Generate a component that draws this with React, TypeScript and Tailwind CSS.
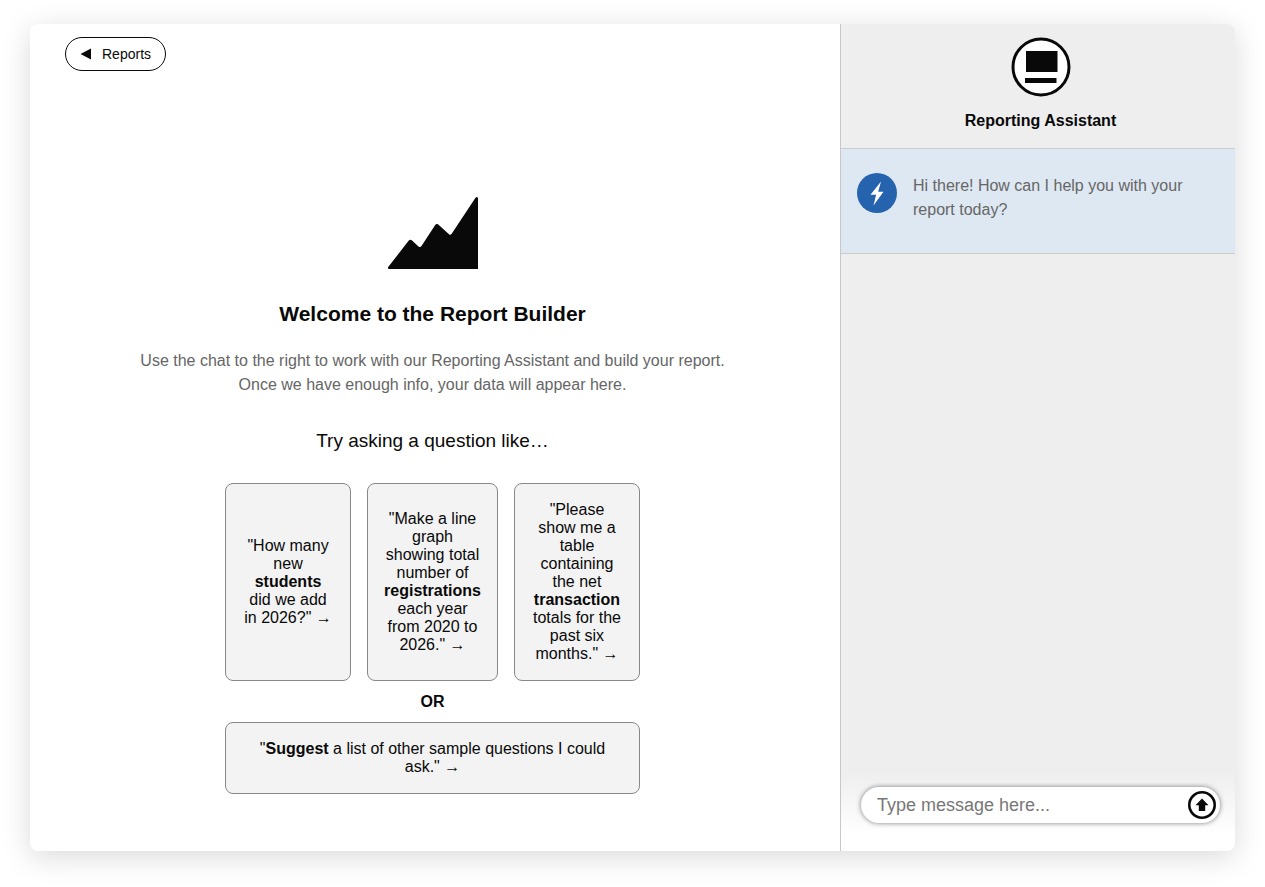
import React, { ReactNode } from 'react';

type PromptCardProps = {
  children: ReactNode;
  className?: string;
};

const PromptCard: React.FC<PromptCardProps> = ({ children, className = '' }) => (
  <button
    type="button"
    className={`rounded-lg border border-[#888] bg-[#f3f3f3] px-4 py-[17px] text-center text-base leading-[18px] ${className}`}
  >
    {children}
  </button>
);

const ChartIcon = () => (
  <svg width="92" height="74" viewBox="0 0 92 74" fill="currentColor" aria-hidden="true">
    <path d="M2 73h89V2.500q-.5-2.500-2.500-.8L64.500 38q-1 1.500-2.500.3L51 28.300q-1.500-1-2.800.6L34.500 50q-1.500 1.800-3 .4L24.800 44.200q-1.600-1.200-3 .4L1.200 71q-.8 2 .8 2z" />
  </svg>
);

const AssistantLogo = () => (
  <svg width="60" height="60" viewBox="0 0 60 60" aria-hidden="true">
    <circle cx="30" cy="30" r="28" fill="#fff" stroke="#090909" strokeWidth="3" />
    <path fill="#090909" d="M15 14h31.500v21H15zM14 41h31.500v5H14z" />
  </svg>
);

const BoltAvatar = () => (
  <svg width="40" height="40" viewBox="0 0 40 40" className="shrink-0" aria-hidden="true">
    <circle cx="20" cy="20" r="20" fill="#2563ae" />
    <path fill="#fff" d="M24 8.500L13.500 21.800h5.600L16.500 32.500 26.500 18.700h-5.300z" />
  </svg>
);

const SendIcon = () => (
  <svg width="28" height="28" viewBox="0 0 28 28" aria-hidden="true">
    <circle cx="14" cy="14" r="12.700" fill="#fff" stroke="#090909" strokeWidth="2.600" />
    <path fill="#090909" d="M14 7.500l6.500 6.800h-3.300V20h-6.400v-5.700H7.500z" />
  </svg>
);

const ReportPane = () => (
  <main className="flex min-w-0 flex-1 flex-col">
    <div className="px-[35px] pt-[13px]">
      <button
        type="button"
        className="flex h-[34px] items-center gap-[11px] rounded-full border border-[#090909] px-[14px] text-sm"
      >
        <svg width="11" height="12" viewBox="0 0 11 12" fill="currentColor" aria-hidden="true">
          <path d="M0.500 6L11 0.500v11z" />
        </svg>
        Reports
      </button>
    </div>

    <div className="flex flex-1 flex-col items-center justify-center pt-[67px] pr-[25px] pl-5 text-center">
      <ChartIcon />
      <h1 className="mt-8 text-[21px] leading-6 font-bold">Welcome to the Report Builder</h1>
      <p className="mt-[23px] text-base leading-6 text-[#666]">
        Use the chat to the right to work with our Reporting Assistant and build your report.
        <br />
        Once we have enough info, your data will appear here.
      </p>
      <h2 className="mt-8 text-[19px] leading-6">Try asking a question like…</h2>

      <div className="mt-[30px] flex w-full max-w-[415px] flex-col">
        <div className="flex min-h-[197px] gap-4">
          <PromptCard className="flex-1">
            "How many new <b>students</b> did we add in 2026?" →
          </PromptCard>
          <PromptCard className="flex-1">
            "Make a line graph showing total number of <b>registrations</b> each year from 2020 to 2026." →
          </PromptCard>
          <PromptCard className="flex-1">
            "Please show me a table containing the net <b>transaction</b> totals for the past six months." →
          </PromptCard>
        </div>
        <div className="pt-[9px] pb-2 text-base leading-6 font-bold">OR</div>
        <PromptCard>
          "<b>Suggest</b> a list of other sample questions I could ask." →
        </PromptCard>
      </div>
    </div>
  </main>
);

const AssistantPane = () => (
  <aside className="flex w-[395px] shrink-0 flex-col border-l border-[#c8c8c8] bg-[#eee]">
    <header className="flex flex-col items-center border-b border-[#ccc] pt-[13px] pb-[15px] pl-[5px]">
      <AssistantLogo />
      <h2 className="mt-3 text-base leading-6 font-bold">Reporting Assistant</h2>
    </header>

    <div className="flex-1">
      <div className="flex gap-4 border-b border-[#ccc] bg-[#dee8f2] px-4 pt-6 pb-[31px]">
        <BoltAvatar />
        <p className="pt-px text-base leading-6 text-[#666]">Hi there! How can I help you with your report today?</p>
      </div>
    </div>

    <form
      className="bg-linear-to-b from-[#eee] to-white to-80% pt-4 pr-[15px] pb-7 pl-5"
      onSubmit={(e) => e.preventDefault()}
    >
      <div className="flex h-9 items-center rounded-full bg-white pr-1 pl-4 shadow-[0_0_5px_rgba(0,0,0,0.5)]">
        <input
          type="text"
          aria-label="Message"
          placeholder="Type message here..."
          className="min-w-0 flex-1 bg-transparent text-lg leading-6 outline-none placeholder:text-[#777]"
        />
        <button type="submit" aria-label="Send message">
          <SendIcon />
        </button>
      </div>
    </form>
  </aside>
);

export default function App() {
  return (
    <div className="flex min-h-screen bg-white px-[30px] pt-6 pb-9 font-['Liberation_Sans',Arial,sans-serif] text-[#090909]">
      <div className="flex w-full overflow-hidden rounded-lg bg-white shadow-[0_6px_30px_rgba(0,0,0,0.15)]">
        <ReportPane />
        <AssistantPane />
      </div>
    </div>
  );
}
